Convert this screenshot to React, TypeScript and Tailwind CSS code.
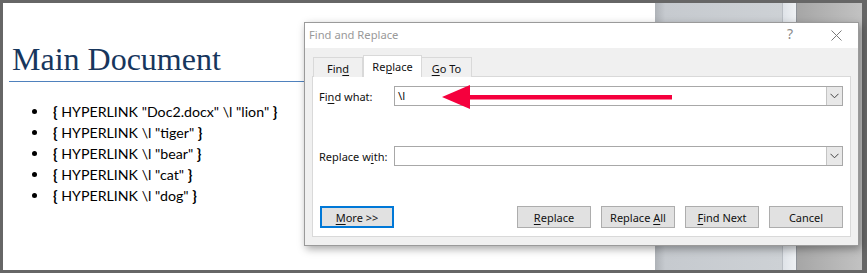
import React from "react";

const ui = { fontFamily: '"Noto Sans", "Liberation Sans", sans-serif' };
const doc = { fontFamily: 'Lato, "Liberation Sans", sans-serif' };

function Chevron() {
  return (
    <svg width="9" height="6" viewBox="0 0 9 6" className="block">
      <path d="M0.5 0.8 L4.5 4.8 L8.5 0.8" fill="none" stroke="#444" strokeWidth="1" />
    </svg>
  );
}

function Combo({ value }: { value?: React.ReactNode }) {
  return (
    <div className="flex h-[20px] flex-1 items-stretch border border-[#a8a8a8] bg-white">
      <div className="flex flex-1 items-center pl-[2px] text-[11.5px] leading-none text-[#111]">{value}</div>
      <div className="flex w-[16px] items-center justify-center border-l border-[#c4c4c4] bg-[#e8e8e8]">
        <Chevron />
      </div>
    </div>
  );
}

function Btn({ children, primary }: { children: React.ReactNode; primary?: boolean }) {
  return (
    <div
      className={
        "flex h-[22px] w-[74px] items-center justify-center bg-[#e1e1e1] text-[11px] leading-none text-[#111] " +
        (primary ? "border-2 border-[#0078d7]" : "border border-[#adadad]")
      }
    >
      <span>{children}</span>
    </div>
  );
}

const items = [
  <>HYPERLINK "Doc2.docx" \l "lion"</>,
  <>HYPERLINK \l "tiger"</>,
  <>HYPERLINK \l "bear"</>,
  <>HYPERLINK \l "cat"</>,
  <>HYPERLINK \l "dog"</>,
];

export default function App() {
  return (
    <div className="relative h-[273px] w-[867px] overflow-hidden bg-[#666666] pb-[3px] pl-[3px] pr-[5px] pt-[3px]">
      <div className="flex h-full w-full">
        {/* document page */}
        <div className="h-full w-[652px] bg-white pl-[6px] pt-[40px]">
          <div
            className="w-[640px] border-b border-[#4f81bd] pb-[6px] pl-[3px] text-[32px] leading-[32px] text-[#17365d]"
            style={{ fontFamily: '"Liberation Serif", serif' }}
          >
            Main Document
          </div>
          <div className="mt-[19px] flex flex-col text-[14.2px] leading-[20px] text-black" style={doc}>
            {items.map((t, i) => (
              <div key={i} className="flex items-center">
                <span className="ml-[23px] mr-[16px] inline-block h-[5px] w-[5px] rounded-full bg-black" />
                <span>
                  <b className="text-[15px]">{"{"}</b> {t} <b className="text-[15px]">{"}"}</b>
                </span>
              </div>
            ))}
          </div>
        </div>
        {/* grey surroundings */}
        <div className="h-full w-[127px] bg-linear-to-r from-[#aeb2b7] via-[#c6cacf] via-[8%] to-[#cdd1d5]" />
        <div className="h-full w-[14px] border-l border-[#b9bec4] bg-linear-to-r from-[#dfe3e8] to-[#eef1f4]" />
        <div className="h-full w-px bg-[#8f9399]" />
        <div className="h-full flex-1 bg-linear-to-r from-[#a6a6a6] to-[#c2c2c2]" />
      </div>

      {/* dialog */}
      <div
        className="absolute left-[304px] top-[22px] flex h-[224px] w-[555px] flex-col border border-[#9a9a9a] bg-[#f0f0f0] shadow-[2px_3px_8px_rgba(0,0,0,0.35)]"
        style={ui}
      >
        <div className="relative flex h-[25px] items-center bg-white pl-[4px] text-[11.2px] text-[#999999]">
          <span>Find and Replace</span>
          <span className="absolute left-[482px] top-[4px] text-[14px] leading-none text-[#8a8a8a]">?</span>
          <svg className="absolute left-[526px] top-[7px]" width="11" height="11" viewBox="0 0 11 11">
            <path d="M0.5 0.5 L10.5 10.5 M10.5 0.5 L0.5 10.5" stroke="#7a7a7a" strokeWidth="1" />
          </svg>
        </div>
        <div className="flex flex-1 flex-col px-[7px] pb-[8px] pt-[7px]">
          {/* tabs */}
          <div className="relative z-10 flex h-[22px] items-start pl-[1px] text-[11px] leading-none text-[#111]">
            <div className="mt-[2px] flex h-[20px] w-[50px] items-center justify-center border border-b-0 border-[#d9d9d9] bg-[#f0f0f0] pt-[1px]">
              <span>
                Fin<u className="underline-offset-2">d</u>
              </span>
            </div>
            <div className="flex h-[22px] w-[59px] items-center justify-center border border-b-0 border-[#d9d9d9] bg-white">
              <span>
                Re<u className="underline-offset-2">p</u>lace
              </span>
            </div>
            <div className="mt-[2px] flex h-[20px] w-[50px] items-center justify-center border border-b-0 border-l-0 border-[#d9d9d9] bg-[#f0f0f0] pt-[1px]">
              <span>
                <u className="underline-offset-2">G</u>o To
              </span>
            </div>
          </div>
          <div className="-mt-px flex flex-1 flex-col border border-[#d9d9d9] bg-white pb-[8px] pl-[6px] pr-[7px] pt-[9px] text-[11px] leading-none text-[#111]">
            <div className="flex items-center">
              <div className="w-[75px]">
                Fi<u className="underline-offset-2">n</u>d what:
              </div>
              <Combo value={<span className="ml-[1px]">\l</span>} />
            </div>
            <div className="mt-[40px] flex items-center">
              <div className="w-[75px]">
                Replace w<u className="underline-offset-2">i</u>th:
              </div>
              <Combo />
            </div>
            <div className="mt-[40px] flex items-center pl-[1px]">
              <Btn primary>
                <u className="underline-offset-2">M</u>ore &gt;&gt;
              </Btn>
              <div className="flex-1" />
              <div className="flex gap-[10px]">
                <Btn>
                  <u className="underline-offset-2">R</u>eplace
                </Btn>
                <Btn>
                  Replace <u className="underline-offset-2">A</u>ll
                </Btn>
                <Btn>
                  <u className="underline-offset-2">F</u>ind Next
                </Btn>
                <Btn>Cancel</Btn>
              </div>
            </div>
          </div>
        </div>
      </div>

      {/* red arrow annotation */}
      <svg className="absolute left-[440px] top-[84px]" width="235" height="27" viewBox="0 0 235 27">
        <polygon points="2,13 30,1 30,25" fill="#f5003d" />
        <rect x="28" y="11" width="204" height="4.5" fill="#f5003d" />
      </svg>
    </div>
  );
}
